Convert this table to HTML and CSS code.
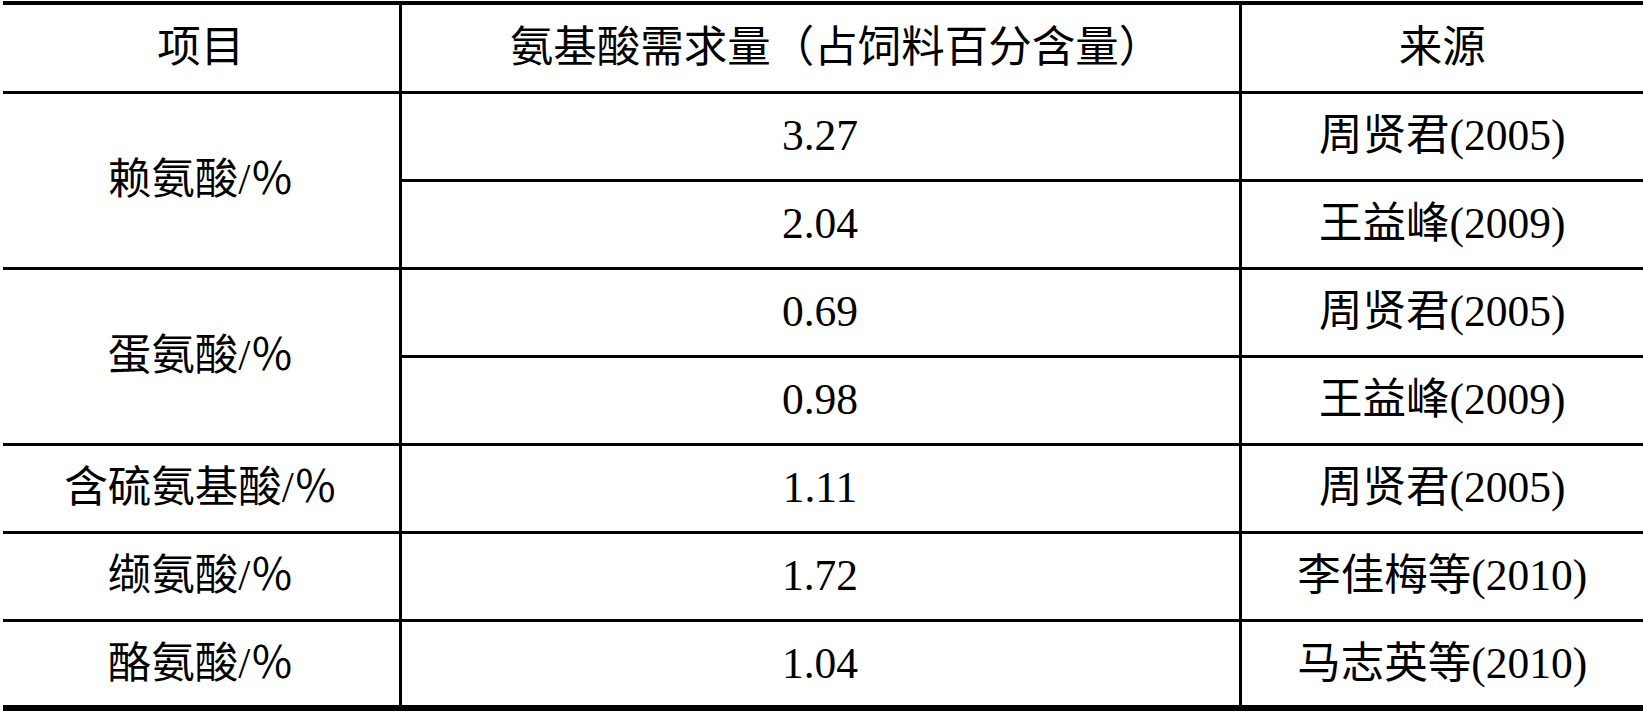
FILE: index.html
```html
<!DOCTYPE html>
<html lang="zh-CN">
<head>
<meta charset="utf-8">
<title>氨基酸需求量</title>
<link rel="stylesheet" href="styles.css">
</head>
<body>
<div class="page">
<table class="amino">
<colgroup><col class="c1"><col class="c2"><col class="c3"></colgroup>
<thead>
<tr class="head"><th class="first">项目</th><th class="need">氨基酸需求量（占饲料百分含量）</th><th>来源</th></tr>
</thead>
<tbody>
<tr class="row"><td class="first" rowspan="2">赖氨酸/％</td><td>3.27</td><td>周贤君(2005)</td></tr>
<tr class="row"><td>2.04</td><td>王益峰(2009)</td></tr>
<tr class="row"><td class="first" rowspan="2">蛋氨酸/％</td><td>0.69</td><td>周贤君(2005)</td></tr>
<tr class="row"><td>0.98</td><td>王益峰(2009)</td></tr>
<tr class="row"><td class="first">含硫氨基酸/％</td><td>1.11</td><td>周贤君(2005)</td></tr>
<tr class="row"><td class="first">缬氨酸/％</td><td>1.72</td><td>李佳梅等(2010)</td></tr>
<tr class="row"><td class="first">酪氨酸/％</td><td>1.04</td><td>马志英等(2010)</td></tr>
</tbody>
</table>
</div>
</body>
</html>
```
FILE: styles.css
```css
html, body {
  margin: 0;
  padding: 0;
  background: #ffffff;
}

.page {
  padding: 1px 0 0 3px;
}

.amino {
  border-collapse: collapse;
  table-layout: fixed;
  width: 1640px;
  font-family: "Liberation Serif", "Noto Sans CJK SC", serif;
  font-size: 43.5px;
  color: #000000;
  border-top: 4px solid #000;
  border-bottom: 6px solid #000;
}

.c1 { width: 397px; }
.c2 { width: 840px; }
.c3 { width: 403px; }

.amino th,
.amino td {
  font-weight: normal;
  text-align: center;
  vertical-align: middle;
  padding: 0;
  line-height: 1;
  border-top: 3px solid #000;
  border-left: 3px solid #000;
  white-space: nowrap;
}

.amino .first {
  border-left: none;
}

.amino .need {
  padding-left: 32px;
}

.head { height: 89px; }
.row { height: 88px; }
```
